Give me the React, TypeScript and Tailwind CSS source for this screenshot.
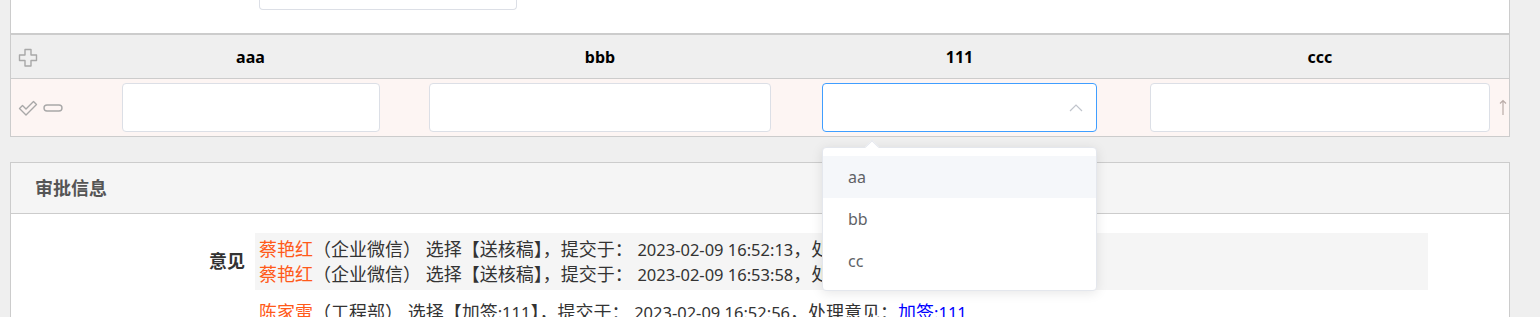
const COLS = "grid grid-cols-[86px_307px_392px_327px_367px_1fr]";

type Opinion = { name: string; dept: string; action: React.ReactNode; time: string; remark: React.ReactNode };

const GROUPED: Opinion[] = [
  { name: "蔡艳红", dept: "企业微信", action: "送核稿", time: "2023-02-09 16:52:13", remark: "送核稿" },
  { name: "蔡艳红", dept: "企业微信", action: "送核稿", time: "2023-02-09 16:53:58", remark: "送核稿" },
];

function PlusIcon() {
  return (
    <svg width="20" height="19" viewBox="0 0 20 19" fill="none" stroke="#a8a8a8" strokeWidth="1.4" strokeLinejoin="round">
      <path d="M7 1.5h6v5.5h5.5v5.5H13V18H7v-5.5H1.5V7H7z" />
    </svg>
  );
}

function CheckIcon() {
  return (
    <svg width="20" height="16" viewBox="0 0 20 16" fill="none" stroke="#a8a8a8" strokeWidth="1.4" strokeLinejoin="round">
      <path d="M1.5 8.5l3-3 3.5 3.5 7.5-7.5 3 3L8 15z" />
    </svg>
  );
}

function MinusIcon() {
  return (
    <svg width="20" height="8" viewBox="0 0 20 8" fill="none" stroke="#a8a8a8" strokeWidth="1.4">
      <rect x="1" y="1" width="18" height="6" rx="3" />
    </svg>
  );
}

function TextBox({ w }: { w: string }) {
  return <div className={`h-[49px] ${w} rounded-[4px] border border-[#dcdfe6] bg-white`} />;
}

function SelectBox() {
  return (
    <div className="relative">
      <div className="flex h-[49px] w-[275px] items-center justify-end rounded-[4px] border border-[#409eff] bg-white pr-[13px]">
        <svg width="14" height="9" viewBox="0 0 14 9" fill="none" stroke="#c0c4cc" strokeWidth="1.2">
          <polyline points="1,8 7,2 13,8" />
        </svg>
      </div>
      <div className="absolute left-0 top-[64px] z-10 w-[275px] rounded-[4px] border border-[#e4e7ed] bg-white py-[8px] shadow-[0_2px_12px_rgba(0,0,0,0.1)]">
        <div className="absolute -top-[6px] left-[44px] h-[10px] w-[10px] rotate-45 border-l border-t border-[#e4e7ed] bg-white" />
        {["aa", "bb", "cc"].map((o, i) => (
          <div
            key={o}
            className={`flex h-[42px] items-center pl-[25px] text-[16px] text-[#606266] ${i === 0 ? "bg-[#f5f7fa]" : ""}`}
          >
            {o}
          </div>
        ))}
      </div>
    </div>
  );
}

function SubTable() {
  return (
    <div className="border-x border-b border-t-2 border-[#cccccc]">
      <div className={`${COLS} h-[44px] items-center border-b border-[#cccccc] bg-[#efefef] text-[16px] font-bold text-black`}>
        <div className="pl-[7px] pt-[1px]">
          <PlusIcon />
        </div>
        <div className="text-center">aaa</div>
        <div className="text-center">bbb</div>
        <div className="text-center">111</div>
        <div className="col-span-2 pl-[8px] text-center">ccc</div>
      </div>
      <div className={`${COLS} h-[57px] items-center bg-[#fdf5f3]`}>
        <div className="flex items-center gap-[5px] pl-[7px]">
          <CheckIcon />
          <MinusIcon />
        </div>
        <div className="pl-[25px]">
          <TextBox w="w-[258px]" />
        </div>
        <div className="pl-[25px]">
          <TextBox w="w-[342px]" />
        </div>
        <div className="pl-[26px]">
          <SelectBox />
        </div>
        <div className="pl-[27px]">
          <TextBox w="w-[340px]" />
        </div>
        <div className="pl-[9px]">
          <svg width="8" height="17" viewBox="0 0 8 17" fill="none" stroke="#b9aca8" strokeWidth="1.2">
            <path d="M4 16V1.5M1 4.5l3-3 3 3" />
          </svg>
        </div>
      </div>
    </div>
  );
}

function OpinionLine({ o }: { o: Opinion }) {
  return (
    <div>
      <span className="text-[#ff5a1a]">{o.name}</span>（{o.dept}） 选择【{o.action}】，提交于： <span className="text-[16.5px]">{o.time}</span>，处理意见：{o.remark}
    </div>
  );
}

function Approval() {
  return (
    <div className="mt-[25px] border border-[#cccccc] bg-white">
      <div className="flex h-[51px] items-center border-b border-[#cccccc] bg-[#f5f5f5] pl-[24px] text-[18px] font-bold text-[#555]">
        审批信息
      </div>
      <div className="flex pt-[19px] text-[18px] leading-[24px] text-[#333]">
        <div className="flex h-[55px] w-[244px] items-center justify-end pr-[10px] font-bold">意见</div>
        <div>
          <div className="w-[1173px] bg-[#f5f5f5] pb-[3px] pl-[4px] pt-[4px]">
            {GROUPED.map((o) => (
              <OpinionLine key={o.time} o={o} />
            ))}
          </div>
          <div className="mt-[10px] pl-[4px]">
            <OpinionLine
              o={{
                name: "陈家雷",
                dept: "工程部",
                action: <>加签<span className="text-[16.5px]">:111</span></>,
                time: "2023-02-09 16:52:56",
                remark: (
                  <span className="text-[#0000ff]">
                    加签<span className="text-[16.5px]">:111</span>
                  </span>
                ),
              }}
            />
          </div>
        </div>
      </div>
    </div>
  );
}

export default function App() {
  return (
    <div className="h-[317px] overflow-hidden bg-[#efefef] pl-[10px] pr-[30px] font-[family-name:'Noto_Sans','Noto_Sans_CJK_SC',sans-serif]">
      <div className="h-[33px] border-x border-[#cccccc] bg-white">
        <div className="ml-[248px] h-[10px] w-[258px] rounded-b-[4px] border border-t-0 border-[#dcdfe6]" />
      </div>
      <SubTable />
      <Approval />
    </div>
  );
}
